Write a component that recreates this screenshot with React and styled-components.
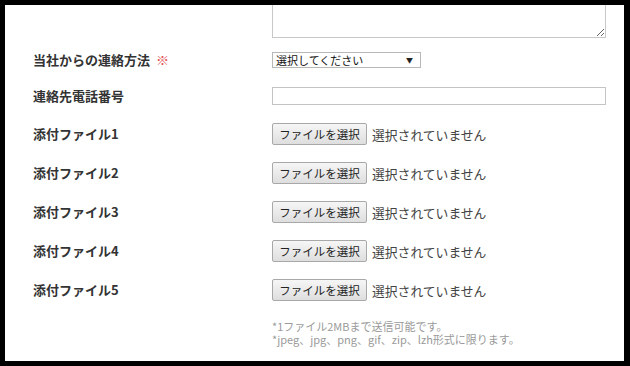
import React from "react";
import styled, { createGlobalStyle } from "styled-components";

const Global = createGlobalStyle`
  html, body { margin: 0; padding: 0; background: #fff; }
  body { font-family: "Noto Sans CJK JP", "Noto Sans", sans-serif; }
`;

const Frame = styled.div`
  width: 630px;
  height: 366px;
  box-sizing: border-box;
  border: 5px solid #000;
  border-right-width: 6px;
  background: #fff;
  overflow: hidden;
  display: flex;
  flex-direction: column;
`;

const Row = styled.div`
  display: grid;
  grid-template-columns: 267px 1fr;
  align-items: center;
  height: ${(p) => p.$h || 22}px;
  margin-top: ${(p) => p.$mt || 0}px;
`;

const Label = styled.div`
  padding-left: 28px;
  font-size: 13px;
  font-weight: 700;
  color: #333;
  line-height: 16px;
  white-space: nowrap;
`;

const Req = styled.span`
  color: #e2524f;
  margin-left: 6px;
  font-weight: 400;
`;

const Textarea = styled.textarea`
  box-sizing: border-box;
  width: 334px;
  height: 33px;
  border: 1px solid #c8c8c8;
  border-top: none;
  margin: 0;
  padding: 0;
  resize: vertical;
  display: block;
`;

const SelectBox = styled.div`
  box-sizing: border-box;
  width: 149px;
  height: 16px;
  border: 1px solid #b8b8b8;
  display: flex;
  align-items: center;
  justify-content: space-between;
  padding: 0 7px 0 3px;
  font-size: 11px;
  color: #111;
  line-height: 14px;
  background: #fff;
`;

const Arrow = styled.span`
  font-size: 7px;
  color: #222;
`;

const TextInput = styled.div`
  box-sizing: border-box;
  width: 334px;
  height: 18px;
  border: 1px solid #c4c4c4;
  background: #fff;
`;

const FileWrap = styled.div`
  display: flex;
  align-items: center;
  gap: 5px;
`;

const FileButton = styled.div`
  box-sizing: border-box;
  width: 95px;
  height: 22px;
  border: 1px solid #a8a8a8;
  border-radius: 2px;
  background: linear-gradient(#f6f6f6, #dedede);
  font-size: 11.5px;
  color: #222;
  display: flex;
  align-items: center;
  justify-content: center;
  line-height: 14px;
  white-space: nowrap;
`;

const Status = styled.span`
  font-size: 12.8px;
  color: #444;
  white-space: nowrap;
`;

const Notes = styled.div`
  margin-top: 19px;
  margin-left: 267px;
  font-size: 11px;
  line-height: 13px;
  color: #9a9a9a;
  white-space: nowrap;
`;

const NoteLine = styled.div`
  display: block;
`;

const files = [1, 2, 3, 4, 5];

export default function App() {
  return (
    <>
      <Global />
      <Frame>
        <Row $h={33}>
          <div />
          <Textarea />
        </Row>
        <Row $mt={11}>
          <Label>
            当社からの連絡方法<Req>※</Req>
          </Label>
          <div>
            <SelectBox>
              <span>選択してください</span>
              <Arrow>▼</Arrow>
            </SelectBox>
          </div>
        </Row>
        <Row $mt={14}>
          <Label>連絡先電話番号</Label>
          <div>
            <TextInput />
          </div>
        </Row>
        {files.map((n, i) => (
          <Row key={n} $mt={i === 0 ? 16 : 17}>
            <Label>添付ファイル{n}</Label>
            <FileWrap>
              <FileButton>ファイルを選択</FileButton>
              <Status>選択されていません</Status>
            </FileWrap>
          </Row>
        ))}
        <Notes>
          <NoteLine>*1ファイル2MBまで送信可能です。</NoteLine>
          <NoteLine>*jpeg、jpg、png、gif、zip、lzh形式に限ります。</NoteLine>
        </Notes>
      </Frame>
    </>
  );
}
